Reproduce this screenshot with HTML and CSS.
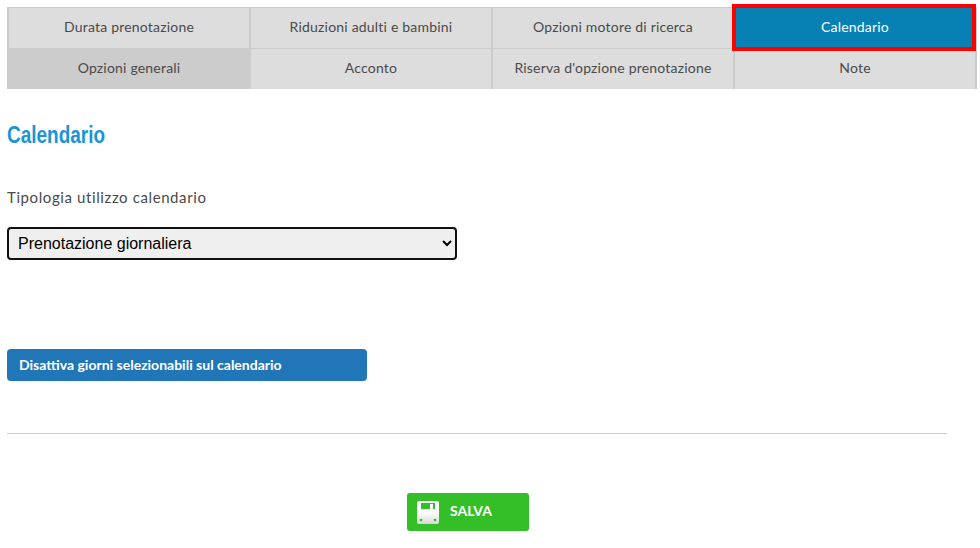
FILE: index.html
```html
<!doctype html>
<html lang="it">
<head>
<meta charset="utf-8">
<meta name="viewport" content="width=device-width,initial-scale=1">
<title>Calendario</title>
<link rel="stylesheet" href="styles.css">
</head>
<body>
<nav class="tabs">
  <a class="tab">Durata prenotazione</a>
  <a class="tab">Riduzioni adulti e bambini</a>
  <a class="tab">Opzioni motore di ricerca</a>
  <a class="tab active">Calendario</a>
  <a class="tab current">Opzioni generali</a>
  <a class="tab">Acconto</a>
  <a class="tab">Riserva d'opzione prenotazione</a>
  <a class="tab">Note</a>
</nav>
<main>
  <h2>Calendario</h2>
  <label class="field-label" for="tipo">Tipologia utilizzo calendario</label>
  <select id="tipo"><option>Prenotazione giornaliera</option></select>
  <button class="btn-blue">Disattiva giorni selezionabili sul calendario</button>
  <hr>
  <div class="save-row">
    <button class="btn-save">
      <svg width="22" height="23" viewBox="0 0 22 23">
        <defs><linearGradient id="disk" x1="0" y1="0" x2="0" y2="1"><stop offset="0" stop-color="#fff"/><stop offset=".5" stop-color="#fff"/><stop offset="1" stop-color="#d6d6d6"/></linearGradient></defs>
        <path d="M2 0H20a2 2 0 0 1 2 2V21a2 2 0 0 1-2 2H2a2 2 0 0 1-2-2V2a2 2 0 0 1 2-2Z" fill="url(#disk)"/>
        <rect x="4" y="2" width="14" height="6" fill="#34bf28"/>
        <rect x="13" y="3" width="3" height="5" fill="#fff"/>
        <circle cx="4" cy="19" r="1.3" fill="#34bf28"/>
        <circle cx="18" cy="19" r="1.3" fill="#34bf28"/>
      </svg>
      <span class="save-text">SALVA</span>
    </button>
  </div>
</main>
</body>
</html>
```
FILE: styles.css
```css
*{box-sizing:border-box}
body{margin:0;background:#fff;color:#444;font-family:"Lato","Liberation Sans",sans-serif}
.tabs{display:grid;grid-template-columns:repeat(4,242px);grid-template-rows:41px 40px;margin:7px 0 0 7px;width:970px;border-top:1px solid #ccc;border-left:2px solid #ccc}
.tab{display:flex;align-items:center;justify-content:center;padding-bottom:4px;background:#ddd;border-right:2px solid #ccc;border-bottom:1px solid #ccc;font-size:14px;letter-spacing:.2px;color:#4a4a4a}
.tab:nth-child(n+5){border-bottom:0}
.tab.current{background:#ccc}
.tab.active{background:#0780b3;color:#fff;position:relative}
.tab.active::after{content:"";position:absolute;top:-4px;left:-3px;right:-1px;bottom:-3px;border:4px solid #f00}
main{padding:0 7px}
h2{margin:31px 0 0;font:bold 24px/30px "Liberation Sans",sans-serif;color:#1a94d6;transform:scaleX(.79);transform-origin:left}
.field-label{display:block;margin-top:38px;font-size:15px;letter-spacing:.6px;color:#4a4a4a}
select{display:block;margin-top:21px;width:450px;height:33px;padding:0 5px;font:16px "Liberation Sans",sans-serif;color:#000;background:#efefef;border:2px solid #111;border-radius:4px}
.btn-blue{display:block;margin-top:89px;width:360px;height:32px;padding:0 12px 2px;text-align:left;background:#2176b8;color:#fff;border:0;border-radius:4px;font:bold 14px "Lato",sans-serif}
hr{margin:52px 0 0;width:940px;height:1px;border:0;background:#ccc}
.save-row{display:flex;padding-left:400px;margin-top:59px}
.btn-save{display:flex;align-items:center;gap:11px;width:122px;height:38px;padding:0 10px;background:#34bf28;color:#fff;border:0;border-radius:3px;font:bold 14px "Lato",sans-serif}
.save-text{margin-bottom:3px}
```
